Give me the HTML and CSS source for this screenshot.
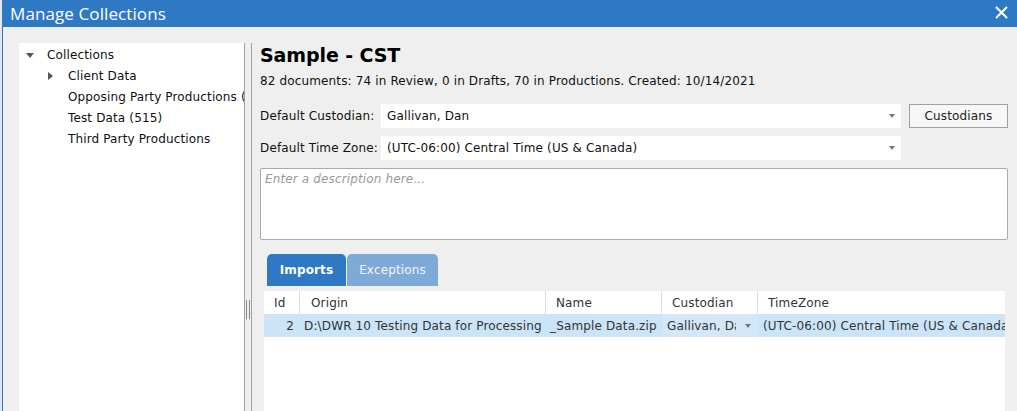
FILE: index.html
```html
<!DOCTYPE html>
<html>
<head>
<meta charset="utf-8">
<link rel="stylesheet" href="styles.css">
</head>
<body>
<div class="window">
  <div class="titlebar">
    <span class="title">Manage Collections</span>
    <svg class="close" width="13" height="13" viewBox="0 0 13 13"><path d="M1 1L12 12M12 1L1 12" stroke="#fff" stroke-width="2" fill="none"/></svg>
  </div>
  <div class="main">
    <div class="tree">
      <div class="node root"><span class="arrow down"></span>Collections</div>
      <div class="node child"><span class="arrow right"></span>Client Data</div>
      <div class="node child leaf">Opposing Party Productions (</div>
      <div class="node child leaf">Test Data (515)</div>
      <div class="node child leaf">Third Party Productions</div>
    </div>
    <div class="splitter"><span class="grip"></span></div>
    <div class="detail">
      <h1 class="heading">Sample - CST</h1>
      <div class="info">82 documents: 74 in Review, 0 in Drafts, 70 in Productions. Created: 10/14/2021</div>
      <div class="field first">
        <span class="label">Default Custodian:</span>
        <div class="select"><span>Gallivan, Dan</span><span class="caret"></span></div>
        <div class="button">Custodians</div>
      </div>
      <div class="field">
        <span class="label">Default Time Zone:</span>
        <div class="select"><span>(UTC-06:00) Central Time (US &amp; Canada)</span><span class="caret"></span></div>
      </div>
      <div class="desc">Enter a description here...</div>
      <div class="tabs">
        <div class="tab active">Imports</div>
        <div class="tab">Exceptions</div>
      </div>
      <div class="grid">
        <div class="row head">
          <div class="cell c-id">Id</div>
          <div class="cell c-origin">Origin</div>
          <div class="cell c-name">Name</div>
          <div class="cell c-cust">Custodian</div>
          <div class="cell c-tz">TimeZone</div>
        </div>
        <div class="row sel">
          <div class="cell c-id num">2</div>
          <div class="cell c-origin">D:\DWR 10 Testing Data for Processing</div>
          <div class="cell c-name">_Sample Data.zip</div>
          <div class="cell c-cust edit"><span class="clip">Gallivan, Dan</span><span class="caret"></span></div>
          <div class="cell c-tz">(UTC-06:00) Central Time (US &amp; Canada)</div>
        </div>
      </div>
    </div>
  </div>
</div>
</body>
</html>
```

FILE: styles.css
```css
* { box-sizing: border-box; }
html, body { margin: 0; padding: 0; }
body {
  width: 1017px;
  height: 411px;
  overflow: hidden;
  background: #e6e6e6;
  font-family: "DejaVu Sans", Verdana, sans-serif;
  font-size: 12px;
  letter-spacing: 0.14px;
  color: #111;
}
.window {
  margin-left: 2px;
  height: 411px;
  display: flex;
  flex-direction: column;
  background: #efefef;
  border-left: 1px solid #2f78c4;
  overflow: hidden;
}
.titlebar {
  height: 27px;
  flex: none;
  background: #2f78c4;
  display: flex;
  align-items: center;
  justify-content: space-between;
  padding: 0 9px 1px 7px;
}
.title {
  color: #fff;
  font-family: "Open Sans", "Noto Sans", sans-serif;
  font-size: 17px;
  letter-spacing: 0.1px;
}
.close { margin-top: -1px; }
.main {
  flex: 1;
  display: flex;
  padding-top: 16px;
  padding-left: 16px;
  min-height: 0;
  overflow: hidden;
}
.tree {
  width: 226px;
  background: #fff;
  border-right: 1px solid #a0a0a0;
  padding-top: 2px;
  flex: none;
}
.node {
  height: 21px;
  line-height: 21px;
  white-space: nowrap;
  overflow: hidden;
  position: relative;
}
.root { padding-left: 28px; }
.child { padding-left: 49px; }
.arrow {
  position: absolute;
  width: 0; height: 0;
}
.arrow.down {
  left: 7px; top: 8px;
  border-left: 4px solid transparent;
  border-right: 4px solid transparent;
  border-top: 5px solid #555;
}
.arrow.right {
  left: 29px; top: 6px;
  border-top: 4px solid transparent;
  border-bottom: 4px solid transparent;
  border-left: 5px solid #555;
}
.splitter {
  width: 7px;
  flex: none;
  border-right: 1px solid #a0a0a0;
  position: relative;
}
.grip {
  position: absolute;
  left: 1px; top: 257px;
  width: 4px; height: 19px;
  border-left: 1px solid #888;
  border-right: 1px solid #888;
}
.detail {
  flex: 1;
  padding: 0 9px 0 8px;
  min-width: 0;
}
.heading {
  margin: 0;
  font-size: 19px;
  font-weight: bold;
  line-height: 24px;
  letter-spacing: -0.1px;
  color: #000;
}
.info {
  margin-top: 6px;
  line-height: 16px;
  color: #111;
}
.field {
  display: flex;
  align-items: center;
  height: 24px;
  margin-top: 8px;
}
.field.first { margin-top: 15px; }
.label {
  width: 121px;
  flex: none;
}
.select {
  width: 520px;
  height: 24px;
  background: #fff;
  display: flex;
  align-items: center;
  justify-content: space-between;
  padding: 0 6px 0 6px;
  flex: none;
}
.caret {
  width: 0; height: 0;
  border-left: 3.5px solid transparent;
  border-right: 3.5px solid transparent;
  border-top: 4px solid #777;
}
.button {
  margin-left: 8px;
  width: 99px;
  height: 24px;
  border: 1px solid #a0a0a0;
  background: #f7f7f7;
  display: flex;
  align-items: center;
  justify-content: center;
  color: #222;
}
.desc {
  margin-top: 8px;
  height: 72px;
  background: #fff;
  border: 1px solid #a9a9a9;
  border-radius: 2px;
  padding: 3px 4px;
  color: #999;
  font-style: italic;
}
.tabs {
  display: flex;
  margin-top: 14px;
  margin-left: 7px;
  height: 32px;
}
.tab {
  width: 91px;
  background: #7eaad7;
  color: #f2f7fc;
  border-radius: 5px 5px 0 0;
  display: flex;
  align-items: center;
  justify-content: center;
  margin-left: 1px;
  padding-bottom: 1px;
}
.tab.active {
  width: 79px;
  margin-left: 0;
  background: #2f78c4;
  color: #fff;
  font-weight: bold;
}
.grid {
  margin-top: 5px;
  margin-left: 4px;
  margin-right: 3px;
  height: 130px;
  background: #fff;
}
.row {
  display: flex;
  height: 23px;
  align-items: stretch;
}
.row.sel { background: #cce4f7; }
.cell {
  display: flex;
  align-items: center;
  padding: 0 6px;
  white-space: nowrap;
  overflow: hidden;
  color: #333;
  flex: none;
}
.head .cell {
  border-right: 1px solid #dcdcdc;
  padding-left: 11px;
}
.head .cell.c-id { padding-left: 10px; }
.head .cell.c-tz { border-right: none; padding-left: 10px; }
.c-id { width: 36px; }
.c-origin { width: 246px; }
.c-name { width: 116px; }
.c-cust { width: 96px; }
.c-tz { flex: 1; }
.head .c-name, .head .c-cust { padding-left: 10px; }
.sel .cell { padding: 0 3px 0 4px; }
.sel .num { justify-content: flex-end; padding-right: 6px; }
.sel .c-origin { padding-left: 4px; }
.sel .c-name { padding-left: 4px; }
.sel .c-cust { padding-left: 5px; background: #d3e7f8; justify-content: space-between; padding-right: 7px; }
.clip { width: 69px; overflow: hidden; }
.sel .c-tz { padding-left: 5px; }
```
